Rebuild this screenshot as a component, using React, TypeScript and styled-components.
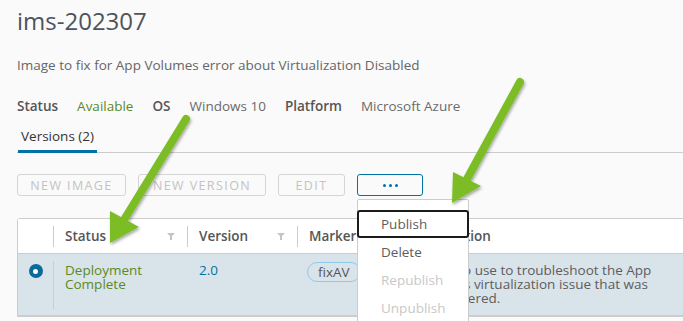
import React from 'react'
import styled, { createGlobalStyle } from 'styled-components'

const GlobalStyle = createGlobalStyle`
    html, body {
        margin: 0;
        padding: 0;
        background: #fafafa;
        overflow: hidden;
    }
    body {
        font-family: 'Open Sans', 'Liberation Sans', sans-serif;
        color: #5d5d5d;
    }
`

const Page = styled.div`
    position: relative;
    width: 683px;
    height: 321px;
    overflow: hidden;
    padding: 0 0 0 17px;
    box-sizing: border-box;
`

const Title = styled.h1`
    margin: 6px 0 0;
    font-size: 24px;
    line-height: 30px;
    font-weight: 400;
    color: #4e545a;
`

const Description = styled.p`
    margin: 20px 0 0;
    font-size: 13.5px;
    line-height: 18px;
    color: #666;
`

const Details = styled.div`
    display: flex;
    align-items: center;
    margin-top: 23px;
    font-size: 13.5px;
    line-height: 18px;
`

const Label = styled.span`
    font-weight: 600;
    margin-right: 19px;
    color: #555;
`

const Value = styled.span<{ $ok?: boolean }>`
    color: ${({ $ok }) => ($ok ? '#5b8a1e' : '#6a6a6a')};
    margin-right: 19px;
`

const Tabs = styled.div`
    display: flex;
    margin-top: 12px;
    border-bottom: 1px solid #ccc;
`

const Tab = styled.div<{ $active?: boolean }>`
    font-size: 13.5px;
    line-height: 18px;
    padding: 0 3px 5px 3px;
    margin-left: 1px;
    margin-bottom: -1px;
    color: #333;
    border-bottom: 3px solid ${({ $active }) => ($active ? '#0072a3' : 'transparent')};
`

const Toolbar = styled.div`
    display: flex;
    gap: 12px;
    margin-top: 21px;
`

const ButtonWrap = styled.div`
    position: relative;
`

const Button = styled.button<{ $primary?: boolean; $w: number }>`
    height: 22px;
    width: ${({ $w }) => $w}px;
    padding: 0;
    box-sizing: border-box;
    background: transparent;
    border: 1px solid ${({ $primary }) => ($primary ? '#0072a3' : '#d5d5d5')};
    border-radius: 3px;
    font-family: inherit;
    font-size: 12.5px;
    letter-spacing: 1.4px;
    color: ${({ $primary }) => ($primary ? '#0072a3' : '#c3c3c3')};
    display: flex;
    align-items: center;
    justify-content: center;
    gap: 3px;
`

const Dot = styled.span`
    width: 3px;
    height: 3px;
    border-radius: 50%;
    background: #0072a3;
`

const Menu = styled.div`
    position: absolute;
    top: 25px;
    left: 0;
    width: 112px;
    padding-top: 10px;
    background: #fff;
    border: 1px solid #ccc;
    border-radius: 2px;
    box-sizing: border-box;
    z-index: 5;
`

const MenuItem = styled.div<{ $focused?: boolean; $disabled?: boolean }>`
    height: 28px;
    display: flex;
    align-items: center;
    padding-left: 22px;
    font-size: 13.5px;
    color: ${({ $disabled }) => ($disabled ? '#c8c8c8' : '#5d5d5d')};
    box-sizing: border-box;
    margin: 0 -1px;
    border: 2px solid ${({ $focused }) => ($focused ? '#1b1b1b' : 'transparent')};
    border-radius: 3px;
`

const Table = styled.div`
    margin-top: 22px;
    width: 760px;
    border: 1px solid #ccc;
    border-radius: 3px 0 0 0;
    background: #fff;
    font-size: 13.5px;
`

const Row = styled.div<{ $header?: boolean; $selected?: boolean }>`
    display: grid;
    grid-template-columns: 35px 134px 110px 107px 1fr;
    height: ${({ $header }) => ($header ? '34px' : '61px')};
    background: ${({ $selected }) => ($selected ? '#d9e3ea' : '#fff')};
    border-bottom: 1px solid #ccc;
    font-weight: ${({ $header }) => ($header ? 600 : 400)};
    color: ${({ $header }) => ($header ? '#555' : '#5d5d5d')};
`

const Cell = styled.div<{ $sep?: boolean; $header?: boolean }>`
    position: relative;
    display: flex;
    align-items: ${({ $header }) => ($header ? 'center' : 'flex-start')};
    justify-content: space-between;
    padding: ${({ $header }) => ($header ? '0 12px' : '9px 12px 0')};
    line-height: 14px;
    &::before {
        content: '';
        display: ${({ $sep }) => ($sep ? 'block' : 'none')};
        position: absolute;
        left: 0;
        top: 7px;
        bottom: 6px;
        border-left: 1px solid #ccc;
    }
`

const RadioCell = styled.div`
    display: flex;
    justify-content: center;
    padding-top: 10px;
`

const Radio = styled.span`
    width: 14px;
    height: 14px;
    border-radius: 50%;
    background: #0a6a9a;
    display: flex;
    align-items: center;
    justify-content: center;
    &::after {
        content: '';
        width: 5px;
        height: 5px;
        border-radius: 50%;
        background: #fff;
    }
`

const Status = styled.span`
    color: #5b8a1e;
`

const VersionLink = styled.span`
    color: #0072a3;
`

const Pill = styled.span`
    display: inline-block;
    border: 1px solid #8ccbe8;
    border-radius: 10px;
    padding: 2px 10px;
    line-height: 14px;
    margin-top: -1px;
    margin-left: -2px;
    color: #565656;
`

const DescText = styled.span`
    width: 250px;
    font-weight: 400;
`

const Filter = () => (
    <svg width="8" height="7" viewBox="0 0 8 7">
        <path d="M0 0H8L5 3V7H3V3Z" fill="#c4c4c4" />
    </svg>
)

const Arrows = styled.svg`
    position: absolute;
    left: 0;
    top: 0;
    pointer-events: none;
    z-index: 10;
`

const Arrow = ({ from, tip, l, r }: { from: number[]; tip: number[]; l: number[]; r: number[] }) => {
    const mid = [(l[0] + r[0]) / 2, (l[1] + r[1]) / 2]
    return (
        <g filter="url(#shadow)">
            <line x1={from[0]} y1={from[1]} x2={mid[0]} y2={mid[1]} stroke="#7cbd26" strokeWidth="8" strokeLinecap="round" />
            <polygon points={`${l.join(',')} ${r.join(',')} ${tip.join(',')}`} fill="#7cbd26" />
        </g>
    )
}

const App = () => (
    <Page>
        <GlobalStyle />
        <Title>ims-202307</Title>
        <Description>Image to fix for App Volumes error about Virtualization Disabled</Description>
        <Details>
            <Label>Status</Label>
            <Value $ok>Available</Value>
            <Label>OS</Label>
            <Value>Windows 10</Value>
            <Label>Platform</Label>
            <Value>Microsoft Azure</Value>
        </Details>
        <Tabs>
            <Tab $active>Versions (2)</Tab>
        </Tabs>
        <Toolbar>
            <Button $w={109}>NEW IMAGE</Button>
            <Button $w={128}>NEW VERSION</Button>
            <Button $w={67}>EDIT</Button>
            <ButtonWrap>
                <Button $primary $w={66}>
                    <Dot />
                    <Dot />
                    <Dot />
                </Button>
                <Menu>
                    <MenuItem $focused>Publish</MenuItem>
                    <MenuItem>Delete</MenuItem>
                    <MenuItem $disabled>Republish</MenuItem>
                    <MenuItem $disabled>Unpublish</MenuItem>
                </Menu>
            </ButtonWrap>
        </Toolbar>
        <Table>
            <Row $header>
                <Cell $header />
                <Cell $header $sep>
                    Status <Filter />
                </Cell>
                <Cell $header $sep>
                    Version <Filter />
                </Cell>
                <Cell $header $sep>Markers</Cell>
                <Cell $header $sep>Description</Cell>
            </Row>
            <Row $selected>
                <RadioCell>
                    <Radio />
                </RadioCell>
                <Cell $sep>
                    <Status>
                        Deployment
                        <br />
                        Complete
                    </Status>
                </Cell>
                <Cell>
                    <VersionLink>2.0</VersionLink>
                </Cell>
                <Cell>
                    <Pill>fixAV</Pill>
                </Cell>
                <Cell>
                    <DescText>
                        Image to use to troubleshoot the App Volumes virtualization issue that was encountered.
                    </DescText>
                </Cell>
            </Row>
        </Table>
        <Arrows width="683" height="321">
            <defs>
                <filter id="shadow" x="-50%" y="-50%" width="200%" height="200%">
                    <feDropShadow dx="1" dy="2" stdDeviation="1.5" floodColor="#000" floodOpacity="0.35" />
                </filter>
            </defs>
            <Arrow from={[186, 119]} tip={[110, 243]} l={[110, 211]} r={[139, 227]} />
            <Arrow from={[520, 82]} tip={[452, 203]} l={[453, 172]} r={[481, 186]} />
        </Arrows>
    </Page>
)

export default App
